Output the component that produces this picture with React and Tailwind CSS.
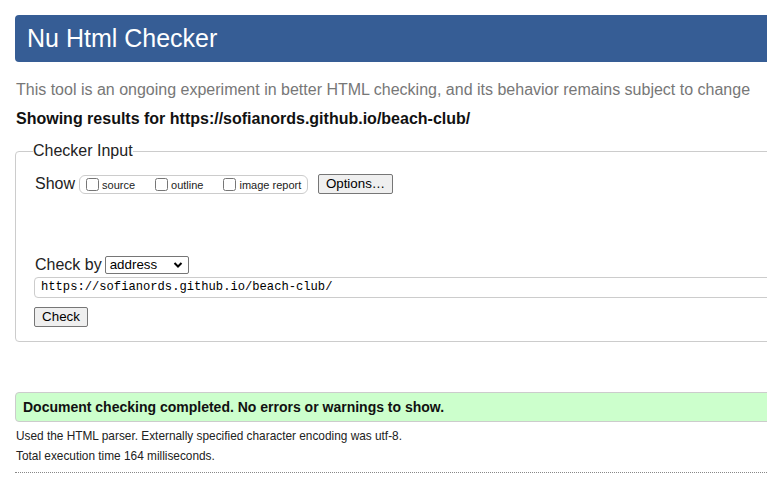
export default function App() {
  return (
    <div className="w-[767px] h-[491px] overflow-hidden bg-white" style={{ fontFamily: '"Liberation Sans", Arial, sans-serif' }}>
      <div className="w-[1000px] px-[15px]">
        <div className="mt-[15px] h-[47px] flex items-center pl-[12px] bg-[#365d95] rounded-[4px]">
          <h1 className="text-[25px] leading-none text-white">Nu Html Checker</h1>
        </div>

        <p className="mt-[19px] pl-[1px] text-[16px] leading-[18px] text-[#777]">
          This tool is an ongoing experiment in better HTML checking, and its behavior remains subject to change
        </p>
        <p className="mt-[11px] pl-[1px] text-[16px] leading-[18px] font-bold text-[#111]">
          Showing results for https://sofianords.github.io/beach-club/
        </p>

        <fieldset className="mt-[14px] border border-[#ccc] rounded-[4px] pl-[19px] pb-[13px]">
          <legend className="ml-[-2px] text-[16px] leading-[18px] text-[#222]">Checker Input</legend>

          <div className="mt-[14px] h-[20px] flex items-center">
            <span className="text-[16px] text-[#222]">Show</span>
            <div className="ml-[4px] h-[19px] w-[229px] flex items-center border border-[#ccc] rounded-[6px] pl-[6px] text-[11px] text-[#222]">
              <label className="flex items-center">
                <input type="checkbox" className="w-[13px] h-[13px] m-0" />
                <span className="ml-[3px] mt-[3px]">source</span>
              </label>
              <label className="flex items-center ml-[20px]">
                <input type="checkbox" className="w-[13px] h-[13px] m-0" />
                <span className="ml-[3px] mt-[3px]">outline</span>
              </label>
              <label className="flex items-center ml-[20px]">
                <input type="checkbox" className="w-[13px] h-[13px] m-0" />
                <span className="ml-[3px] mt-[3px]">image report</span>
              </label>
            </div>
            <button className="ml-[10px] h-[20px] w-[75px] border border-[#767676] bg-[#efefef] rounded-[2px] text-[13.33px] text-black leading-none">
              Options…
            </button>
          </div>

          <div className="mt-[61px] h-[19px] flex items-center">
            <span className="text-[16px] text-[#222]">Check by</span>
            <div className="ml-[3px] h-[18px] w-[84px] flex items-center justify-between border border-[#767676] rounded-[2px] pl-[4px] pr-[5px] text-[13.33px] text-black">
              <span>address</span>
              <svg className="w-[10px] h-[10px]" viewBox="0 0 10 10" fill="none" stroke="black" strokeWidth="2">
                <path d="M1.5 3l3.5 3.5L8.5 3" />
              </svg>
            </div>
          </div>

          <div className="mt-[3px] ml-[-1px] h-[21px] flex items-center border border-[#ccc] rounded-[4px] pl-[6px] text-[12.15px] text-black" style={{ fontFamily: '"Liberation Mono", "DejaVu Sans Mono", monospace' }}>
            https://sofianords.github.io/beach-club/
          </div>

          <button className="mt-[9px] ml-[-1px] h-[20px] w-[54px] border border-[#767676] bg-[#efefef] rounded-[2px] text-[13.33px] text-black leading-none">
            Check
          </button>
        </fieldset>

        <div className="mt-[50px] h-[30px] flex items-center border border-[#ccc] rounded-[4px] bg-[#ccffcc] pl-[7px]">
          <span className="text-[14px] font-bold text-[#111]">Document checking completed. No errors or warnings to show.</span>
        </div>

        <p className="mt-[7px] pl-[1px] text-[11.85px] leading-[14px] text-[#222]">
          Used the HTML parser. Externally specified character encoding was utf-8.
        </p>
        <p className="mt-[6px] pl-[1px] text-[11.85px] leading-[14px] text-[#222]">
          Total execution time 164 milliseconds.
        </p>
        <div className="mt-[9px] border-t border-dotted border-[#888]" />
      </div>
    </div>
  );
}
